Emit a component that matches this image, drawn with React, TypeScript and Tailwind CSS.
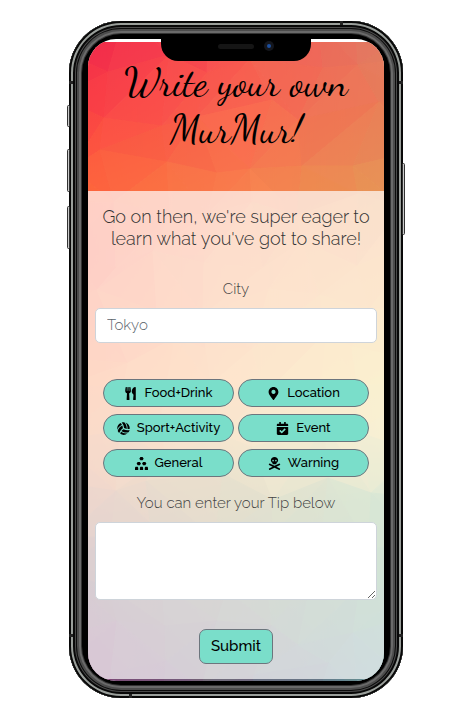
import React from "react";
import {
  FaUtensils,
  FaMapMarkerAlt,
  FaVolleyballBall,
  FaCalendarCheck,
  FaSkullCrossbones,
} from "react-icons/fa";

type RGB = [number, number, number];

// Colour stops of the low-poly wallpaper: a height, then left, centre and right colours.
const STOPS: { y: number; c: [RGB, RGB, RGB] }[] = [
  { y: 0, c: [[243, 44, 76], [248, 84, 82], [226, 124, 98]] },
  { y: 70, c: [[250, 66, 68], [250, 102, 80], [234, 124, 88]] },
  { y: 145, c: [[253, 102, 60], [249, 125, 78], [230, 148, 86]] },
  { y: 210, c: [[252, 92, 66], [248, 148, 88], [245, 165, 90]] },
  { y: 340, c: [[252, 128, 66], [250, 168, 88], [240, 206, 96]] },
  { y: 400, c: [[235, 132, 80], [225, 175, 98], [225, 202, 112]] },
  { y: 460, c: [[192, 118, 88], [168, 152, 90], [130, 178, 115]] },
  { y: 540, c: [[125, 92, 108], [122, 128, 112], [100, 158, 118]] },
  { y: 640, c: [[128, 66, 118], [110, 104, 125], [98, 142, 152]] },
];

const mix = (a: RGB, b: RGB, t: number): RGB => [
  a[0] + (b[0] - a[0]) * t,
  a[1] + (b[1] - a[1]) * t,
  a[2] + (b[2] - a[2]) * t,
];

function across(c: [RGB, RGB, RGB], x: number): RGB {
  const t = Math.min(1, Math.max(0, x / 296)) * 2;
  return t < 1 ? mix(c[0], c[1], t) : mix(c[1], c[2], t - 1);
}

function colourAt(x: number, y: number): RGB {
  const cy = Math.min(639, Math.max(0, y));
  let i = 0;
  while (i < STOPS.length - 2 && STOPS[i + 1].y <= cy) i++;
  const a = STOPS[i];
  const b = STOPS[i + 1];
  return mix(across(a.c, x), across(b.c, x), (cy - a.y) / (b.y - a.y));
}

const noise = (n: number) => {
  const s = Math.sin(n * 127.1 + 31.7) * 43758.5453;
  return s - Math.floor(s);
};

function buildFacets() {
  const cols = 7;
  const rows = 15;
  const point = (i: number, j: number): [number, number] => [
    Math.round((i - 0.5) * 50 + (noise(i * 17 + j * 5) - 0.5) * 34),
    Math.round((j - 0.5) * 47 + (noise(i * 7 + j * 29 + 3) - 0.5) * 32),
  ];
  const facets: { points: string; fill: string }[] = [];
  for (let j = 0; j < rows; j++) {
    for (let i = 0; i < cols; i++) {
      const a = point(i, j);
      const b = point(i + 1, j);
      const c = point(i + 1, j + 1);
      const d = point(i, j + 1);
      const pairs = noise(i + j * 11) > 0.5 ? [[a, b, c], [a, c, d]] : [[a, b, d], [b, c, d]];
      pairs.forEach((t, k) => {
        const x = (t[0][0] + t[1][0] + t[2][0]) / 3;
        const y = (t[0][1] + t[1][1] + t[2][1]) / 3;
        const shade = (noise(i * 3 + j * 13 + k * 41) - 0.5) * 4;
        const [r, g, bl] = colourAt(x, y).map((v) => Math.round(Math.min(255, v + shade)));
        facets.push({ points: t.map((p) => p.join(",")).join(" "), fill: `rgb(${r},${g},${bl})` });
      });
    }
  }
  return facets;
}

const FACETS = buildFacets();

function Wallpaper() {
  return (
    <svg
      className="absolute inset-0 h-full w-full"
      viewBox="0 0 296 639"
      preserveAspectRatio="none"
      aria-hidden="true"
    >
      <defs>
        {[0, 1, 2].map((k) => (
          <linearGradient key={k} id={`col${k}`} x1="0" y1="0" x2="0" y2="1">
            {STOPS.map((s) => (
              <stop key={s.y} offset={s.y / 640} stopColor={`rgb(${s.c[k].join(",")})`} />
            ))}
          </linearGradient>
        ))}
        <linearGradient id="fadeLeft" x1="0" y1="0" x2="1" y2="0">
          <stop offset="0" stopColor="#fff" />
          <stop offset="0.5" stopColor="#000" />
        </linearGradient>
        <linearGradient id="fadeRight" x1="0" y1="0" x2="1" y2="0">
          <stop offset="0.5" stopColor="#000" />
          <stop offset="1" stopColor="#fff" />
        </linearGradient>
        <mask id="maskLeft">
          <rect width="296" height="639" fill="url(#fadeLeft)" />
        </mask>
        <mask id="maskRight">
          <rect width="296" height="639" fill="url(#fadeRight)" />
        </mask>
      </defs>
      {FACETS.map((f, i) => (
        <polygon key={i} points={f.points} fill={f.fill} stroke={f.fill} strokeWidth="1" />
      ))}
      <g opacity="0.35">
        <rect width="296" height="639" fill="url(#col1)" />
        <rect width="296" height="639" fill="url(#col0)" mask="url(#maskLeft)" />
        <rect width="296" height="639" fill="url(#col2)" mask="url(#maskRight)" />
      </g>
    </svg>
  );
}

function PileIcon({ className }: { className?: string }) {
  return (
    <svg viewBox="0 0 24 24" className={className} fill="currentColor" aria-hidden="true">
      <path d="M10 0h4l2 3-2 3h-4L8 3zM5 9h4l2 3-2 3H5l-2-3zM15 9h4l2 3-2 3h-4l-2-3zM1 18h4l1 2v4H0v-4zM10 18h4l1 2v4H9v-4zM19 18h4l1 2v4h-6v-4z" />
    </svg>
  );
}

const CATEGORIES = [
  { label: "Food+Drink", Icon: FaUtensils },
  { label: "Location", Icon: FaMapMarkerAlt },
  { label: "Sport+Activity", Icon: FaVolleyballBall },
  { label: "Event", Icon: FaCalendarCheck },
  { label: "General", Icon: PileIcon },
  { label: "Warning", Icon: FaSkullCrossbones },
];

const SIDE = "absolute w-[3px] rounded-sm border border-[#333] bg-[#ccc]";
const BAND = "absolute bg-[#222]";

export default function App() {
  return (
    <main className="flex justify-center bg-white pt-[21px] pb-[22px] font-['Raleway','Lato',sans-serif] text-[#444]">
      <div className="relative w-full max-w-[334px] rounded-[52px] bg-black px-[19px] pt-[18px] pb-[17px] shadow-[inset_0_0_0_2px_#080808,inset_0_0_0_4px_#9a9f9b,inset_0_0_0_6px_#080808,inset_0_0_0_7px_#4a4a4a,inset_0_0_0_8px_#0c0c0c,inset_0_0_0_10px_#4c4c4c,inset_0_0_0_12px_#6a6a6a,inset_0_0_0_13px_#333]">
        <span className={`${SIDE} top-[84px] -left-[2px] h-[22px]`} />
        <span className={`${SIDE} top-[128px] -left-[2px] h-[43px]`} />
        <span className={`${SIDE} top-[185px] -left-[2px] h-[43px]`} />
        <span className={`${SIDE} top-[142px] -right-[2px] h-[72px]`} />
        <span className={`${BAND} top-[60px] left-0 h-[3px] w-[4px]`} />
        <span className={`${BAND} top-[60px] right-0 h-[3px] w-[4px]`} />
        <span className={`${BAND} bottom-[61px] left-0 h-[3px] w-[4px]`} />
        <span className={`${BAND} right-0 bottom-[61px] h-[3px] w-[4px]`} />
        <span className={`${BAND} top-0 right-[60px] h-[4px] w-[3px]`} />
        <span className={`${BAND} bottom-0 left-[60px] h-[4px] w-[3px]`} />

        <div className="overflow-hidden rounded-[28px] bg-white pt-[3px]">
          <div className="relative isolate pb-[2px]">
            <Wallpaper />
            <header className="relative h-[149px] pt-[17px] text-center text-black">
              <h1 className="font-['Dancing_Script','Liberation_Serif',cursive] text-[40px] leading-[47px]">
                Write your own
                <br />
                MurMur!
              </h1>
            </header>
            <form
              className="relative flex flex-col bg-white/70 px-[7px] pt-[15px] pb-[15px]"
              onSubmit={(e) => e.preventDefault()}
            >
              <h2 className="text-center text-[18px] leading-[22px] font-light whitespace-nowrap text-[#333]">
                Go on then, we're super eager to
                <br />
                learn what you've got to share!
              </h2>
              <label htmlFor="city" className="mt-[27px] text-center text-[15px] leading-[24px] font-light">
                City
              </label>
              <input
                id="city"
                type="text"
                placeholder="Tokyo"
                className="mt-[7px] h-[35px] w-full rounded-[5px] border border-[#ced4da] bg-white px-[11px] pb-[2px] text-[15px] font-light outline-none placeholder:text-[#5c656d]"
              />
              <div className="mt-9 grid grid-cols-2 gap-x-1 gap-y-[7px] px-2">
                {CATEGORIES.map(({ label, Icon }) => (
                  <button
                    key={label}
                    type="button"
                    className="flex h-7 items-center justify-center gap-[7px] rounded-full border border-[#6c757d] bg-[#7adeca] text-[13px] font-medium text-black"
                  >
                    <Icon className="h-[13px] w-auto" />
                    {label}
                  </button>
                ))}
              </div>
              <label htmlFor="tip" className="mt-[14px] text-center text-[15px] leading-[24px] font-light">
                You can enter your Tip below
              </label>
              <textarea
                id="tip"
                className="mt-[7px] h-[78px] w-full rounded-[5px] border border-[#ced4da] bg-white p-2 outline-none"
              />
              <button
                type="submit"
                className="mt-[29px] h-[35px] self-center rounded-[7px] border border-[#6c757d] bg-[#7adeca] px-[11px] text-[15px] font-medium text-black"
              >
                Submit
              </button>
            </form>
          </div>
        </div>

        <div className="absolute inset-x-0 top-[17px] flex justify-center">
          <div className="relative flex h-[44px] w-[150px] items-start justify-center">
            <div className="flex h-[23px] w-full items-start justify-center rounded-b-[17px] bg-black pt-[6px]">
              <span className="h-[5px] w-[36px] rounded-full bg-[#151515]" />
            </div>
            <span className="absolute top-[3px] right-[37px] flex size-[10px] items-center justify-center rounded-full bg-[#14161c]">
              <span className="size-[4px] rounded-full bg-[#1d50a0]" />
            </span>
          </div>
        </div>
      </div>
    </main>
  );
}
